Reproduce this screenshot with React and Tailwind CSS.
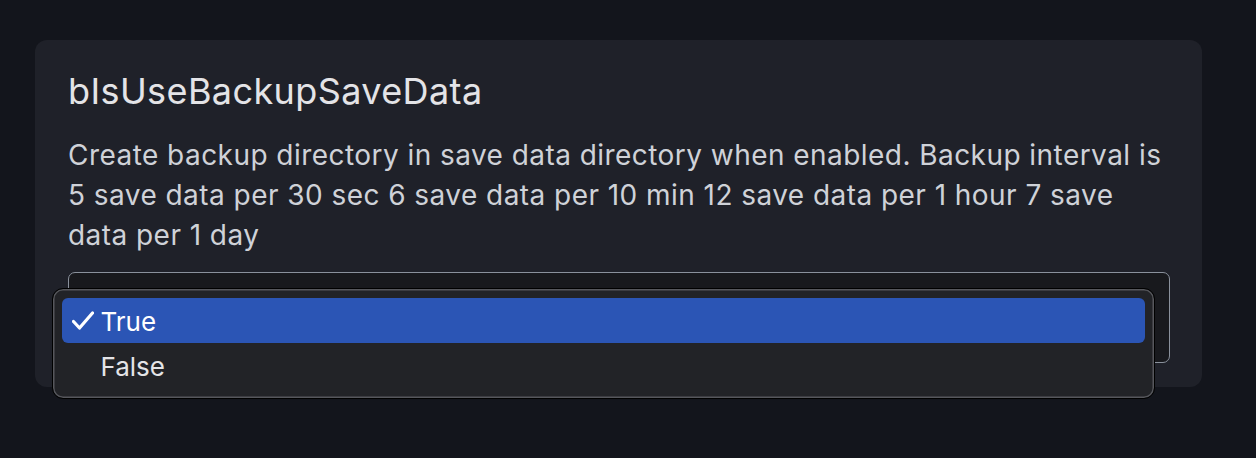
import React from "react";

export default function App() {
  return (
    <div
      className="w-[1256px] h-[458px] bg-[#13151c] pt-[40px] pl-[35px]"
      style={{ fontFamily: "Inter, 'Noto Sans', sans-serif" }}
    >
      <div className="w-[1167px] h-[347px] rounded-[12px] bg-[#1f2129] pl-[33px] pr-[32px] pt-[29px]">
        <h2 className="text-[36px] leading-[44px] tracking-[0.4px] text-[#e4e4e7]">bIsUseBackupSaveData</h2>
        <p className="mt-[22px] text-[28px] leading-[40px] tracking-[0.45px] text-[#cfd2d8]">
          Create backup directory in save data directory when enabled. Backup interval is 5 save data per 30 sec 6 save data per 10 min 12 save data per 1 hour 7 save data per 1 day
        </p>
        <div className="relative mt-[17px] w-[1102px] h-[91px] rounded-[7px] border-[1.5px] border-[#8a919c] bg-[#18191d]">
          <div className="absolute left-[-17.5px] top-[14.5px] w-[1103px] h-[111px] rounded-[11px] border border-black bg-[#222327] shadow-[inset_0_0_0_1.5px_#56575c] p-[9px]">
            <div className="flex items-center h-[45px] rounded-[6px] bg-[#2b55b5] text-white text-[26px] pt-[2px]">
              <svg className="ml-[10px] mr-[7px]" width="22" height="20" viewBox="0 0 22 20" fill="none">
                <path d="M1.5 10.5 L7.5 17 L20.5 2" stroke="white" strokeWidth="3.2" strokeLinecap="round" strokeLinejoin="round" />
              </svg>
              <span>True</span>
            </div>
            <div className="flex items-center h-[45px] text-[#e4e4e7] text-[26px] pl-[39px] pt-[2px]">False</div>
          </div>
        </div>
      </div>
    </div>
  );
}
